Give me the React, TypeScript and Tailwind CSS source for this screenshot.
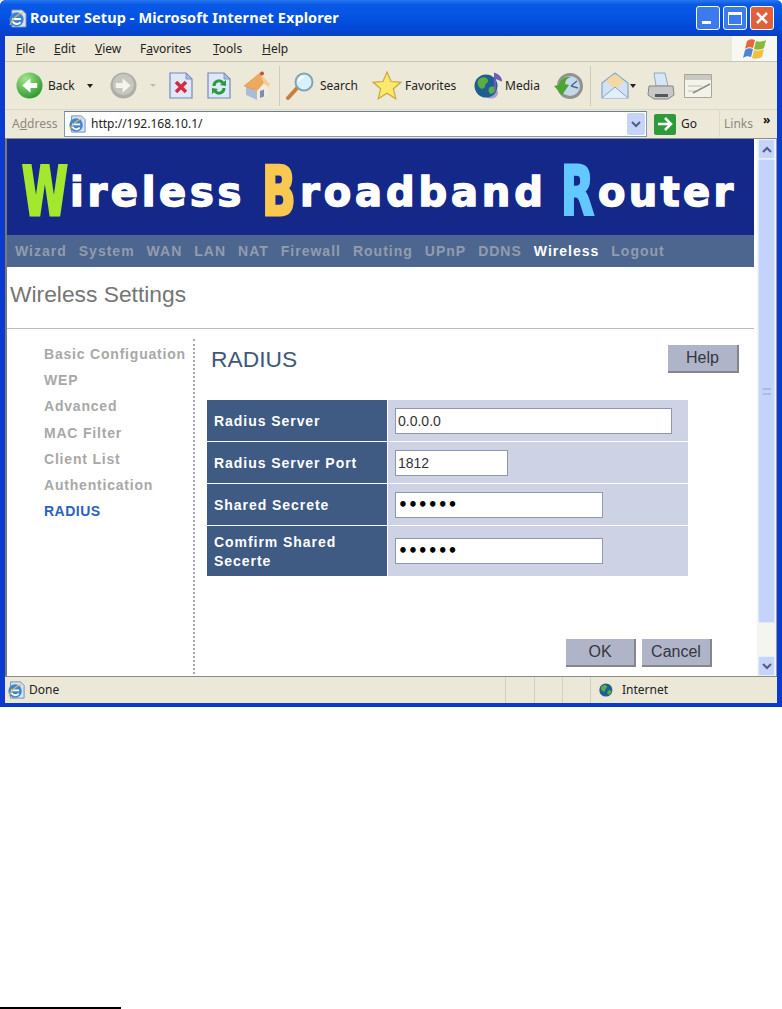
import React from "react";

const menuItems = [
  { pre: "", u: "F", post: "ile", w: "w-[38px]" },
  { pre: "", u: "E", post: "dit", w: "w-[41px]" },
  { pre: "", u: "V", post: "iew", w: "w-[45px]" },
  { pre: "F", u: "a", post: "vorites", w: "w-[73px]" },
  { pre: "", u: "T", post: "ools", w: "w-[49px]" },
  { pre: "", u: "H", post: "elp", w: "w-[40px]" },
];

const navItems = ["Wizard", "System", "WAN", "LAN", "NAT", "Firewall", "Routing", "UPnP", "DDNS", "Wireless", "Logout"];
const sideItems = ["Basic Configuation", "WEP", "Advanced", "MAC Filter", "Client List", "Authentication", "RADIUS"];

function BackIcon() {
  return (
    <svg width="27" height="27" viewBox="0 0 28 28" className="shrink-0">
      <defs>
        <radialGradient id="back" cx="35%" cy="25%" r="85%">
          <stop offset="0%" stopColor="#a4e48a" />
          <stop offset="100%" stopColor="#239428" />
        </radialGradient>
      </defs>
      <circle cx="14" cy="14" r="13.5" fill="url(#back)" />
      <path d="M22 11.500h-7V6.500L6.500 14l8.500 7.500V16.500h7z" fill="#fff" />
    </svg>
  );
}

function ForwardIcon() {
  return (
    <svg width="27" height="27" viewBox="0 0 28 28" className="shrink-0">
      <circle cx="14" cy="14" r="13.5" fill="#aeaea6" />
      <circle cx="14" cy="13" r="11" fill="#c6c6be" />
      <path d="M6 11.500h7V6.500l8.500 7.500-8.500 7.500V16.500H6z" fill="#f4f4ef" />
    </svg>
  );
}

function PageIcon({ children }: { children: React.ReactNode }) {
  return (
    <svg width="24" height="27" viewBox="0 0 24 27" className="shrink-0">
      <path d="M1 1h16l6 6v19H1z" fill="#dfe8f8" stroke="#7488b8" strokeWidth="1.2" />
      <path d="M17 1v6h6z" fill="#a9bde6" stroke="#7488b8" strokeWidth="0.8" />
      {children}
    </svg>
  );
}

function HomeIcon() {
  return (
    <svg width="28" height="30" viewBox="0 0 28 30" className="shrink-0">
      <path d="M3 15l11 5v9L3 24z" fill="#a9bdd6" />
      <path d="M14 19l6-7 5 5v8l-11 4z" fill="#f1ecdc" />
      <path d="M17 20l4-1.500v7L17 27z" fill="#7a8fb0" />
      <path d="M1 15L17 2l3.500 10L14 19.500z" fill="#eda95d" stroke="#d08a42" strokeWidth="0.5" />
      <path d="M17 2l10 11.500-1.500 2L20.500 12z" fill="#f6c98e" />
      <circle cx="19" cy="2.500" r="2" fill="#c94f3c" />
    </svg>
  );
}

function SearchIcon() {
  return (
    <svg width="29" height="28" viewBox="0 0 29 28" className="shrink-0">
      <path d="M2 26l10-11" stroke="#c6803a" strokeWidth="4" strokeLinecap="round" />
      <circle cx="18" cy="10" r="8.5" fill="#d8f0fa" stroke="#7fa4b8" strokeWidth="2" />
      <path d="M13 9a5 5 0 0 1 5-4" stroke="#fff" strokeWidth="2" fill="none" />
    </svg>
  );
}

function StarIcon() {
  return (
    <svg width="30" height="29" viewBox="0 0 30 29" className="shrink-0">
      <path d="M15 1l4 9.5 10 .8-7.600 6.500 2.400 10L15 22.300 6.200 27.800l2.400-10L1 11.300l10-.8z" fill="#fbe96c" stroke="#c9a83c" strokeWidth="1.2" />
    </svg>
  );
}

function GlobeIcon({ size, note }: { size: number; note?: boolean }) {
  return (
    <svg width={size} height={size} viewBox="0 0 28 28" className="shrink-0">
      {note && <ellipse cx="17" cy="21" rx="7" ry="5.500" fill="#a79ad8" />}
      <circle cx="12" cy="14" r="11.500" fill="#1f5f8f" />
      <path d="M5 7c4-3 8-2 9 1s-3 3-3 6-4 4-6 1-2-6 0-8zM15 16c2-2 6-2 7 0s-3 6-5 6-3-4-2-6z" fill="#58ad45" />
      {note && <path d="M21 2v16M21 2c3 1 5 3 6 6-2-1-4-2-6-2z" stroke="#6f5cb8" strokeWidth="2" fill="#6f5cb8" />}
    </svg>
  );
}

function HistoryIcon() {
  return (
    <svg width="29" height="28" viewBox="0 0 29 28" className="shrink-0">
      <circle cx="16" cy="14" r="11.500" fill="#c4d8ea" stroke="#8f948e" strokeWidth="3" />
      <path d="M17 14l6-5M17 14l7 2" stroke="#4c6a88" strokeWidth="1.500" />
      <path d="M0 14l5-1c1-5 6-9 12-8-4 1-6 4-6 7l4 1-7 10z" fill="#4ba52f" />
    </svg>
  );
}

function MailIcon() {
  return (
    <svg width="28" height="27" viewBox="0 0 28 27" className="shrink-0">
      <path d="M1 11L14 1l13 10v15H1z" fill="#cfe2f8" stroke="#8aa4c8" strokeWidth="1.200" />
      <path d="M5 10c2-3 5-7 9-7s7 4 9 7l-9 7z" fill="#f3d9a0" />
      <path d="M1 26l13-11 13 11" fill="#e2eefb" stroke="#8aa4c8" strokeWidth="1" />
    </svg>
  );
}

function PrintIcon() {
  return (
    <svg width="28" height="28" viewBox="0 0 28 28" className="shrink-0">
      <path d="M7 1h11l3 13H9z" fill="#d5e6f6" stroke="#95a8b8" />
      <path d="M2 14h24l1 9-6 4H7l-6-4z" fill="#c8c9c6" stroke="#84878a" />
      <path d="M8 22h13v3H8z" fill="#55585a" />
    </svg>
  );
}

function EditIcon() {
  return (
    <svg width="28" height="24" viewBox="0 0 28 24" className="shrink-0">
      <path d="M.5.5h27v23H.5z" fill="#f4f3ea" stroke="#a6a69c" />
      <path d="M1 1h26v5H1z" fill="#c9c9bf" />
      <path d="M4 12h14M4 17h9" stroke="#c0c0b6" strokeWidth="1.200" />
      <path d="M9 19l17-9" stroke="#8e8e84" strokeWidth="1.500" />
    </svg>
  );
}

function IePage({ size }: { size: number }) {
  return (
    <svg width={size} height={size} viewBox="0 0 20 20" className="shrink-0">
      <path d="M4 1h11l4 4v14H4z" fill="#d7e4f6" stroke="#6a88b8" />
      <circle cx="9" cy="11" r="7.500" fill="#3f86d2" />
      <path d="M4.500 10.500h9M5 13c1 3 6 4 8 1" stroke="#fff" strokeWidth="2" fill="none" />
      <path d="M2 17c2-6 8-12 14-13" stroke="#e6ba5a" strokeWidth="1.200" fill="none" />
    </svg>
  );
}

function XpFlag() {
  return (
    <svg width="24" height="22" viewBox="0 0 24 22">
      <path d="M4 3c3-2 5-2 8-1l-2 8C7 9 5 9 2 11z" fill="#e8683c" />
      <path d="M13 3c3 1 6 1 10-1l-2 8c-3 2-7 2-10 1z" fill="#8ab83c" />
      <path d="M2 12c3-2 5-2 8-1l-2 8c-3-1-5-1-8 1z" fill="#4c84d8" />
      <path d="M11 12c3 1 6 1 10-1l-2 8c-4 2-7 2-10 1z" fill="#f0c040" />
    </svg>
  );
}

function ScrollButton({ down }: { down?: boolean }) {
  return (
    <div className="h-[20px] w-[17px] mx-auto rounded-[2px] bg-[#c5d4f8] border border-[#e6edfc] flex items-center justify-center">
      <svg width="10" height="7" viewBox="0 0 10 7">
        <path d={down ? "M1 1l4 4 4-4" : "M1 6l4-4 4 4"} stroke="#4d6185" strokeWidth="2" fill="none" />
      </svg>
    </div>
  );
}

function FormRow({ label, h, children }: { label: React.ReactNode; h: string; children: React.ReactNode }) {
  return (
    <div className={`flex ${h}`}>
      <div className="w-[180px] bg-[#3f5a83] text-white font-bold text-[14px] leading-[19px] tracking-[0.95px] pl-[7px] pt-[2px] flex items-center">
        {label}
      </div>
      <div className="w-[300px] ml-px bg-[#cdd3e5] pl-[7px] flex items-center">{children}</div>
    </div>
  );
}

function FieldInput({ w, value, password }: { w: string; value: string; password?: boolean }) {
  return (
    <input
      type={password ? "password" : "text"}
      readOnly
      defaultValue={value}
      className={`${w} h-[26px] bg-white border border-[#8d98ac] pl-[2px] outline-none ${password ? "text-black text-[15.500px] font-bold font-['DejaVu_Sans',sans-serif]" : "text-[#333] text-[14px] font-['Liberation_Sans',sans-serif]"}`}
    />
  );
}

function GrayButton({ w, h, label }: { w: string; h: string; label: string }) {
  return (
    <div className={`${w} ${h} bg-[#b0b4c8] border-r-2 border-b-2 border-r-[#84868e] border-b-[#84868e] flex items-center justify-center text-[16px] text-[#33373f]`}>
      {label}
    </div>
  );
}

export default function App() {
  return (
    <div className="w-[782px] h-[1009px] overflow-hidden bg-white font-['Liberation_Sans',sans-serif]">
      <div className="h-[707px] flex flex-col bg-[#0a3ad0] rounded-t-[6px] overflow-hidden">
        {/* title bar */}
        <div className="h-[36px] flex items-center pl-[8px] pr-[8px] bg-[linear-gradient(#2a78ee_0%,#0a5ae6_12%,#0553e2_45%,#0348d8_80%,#0a3fc0_100%)]">
          <IePage size={19} />
          <span className="ml-[3px] text-white font-bold text-[14.5px] tracking-[0.1px] font-['Noto_Sans',sans-serif]">
            Router Setup - Microsoft Internet Explorer
          </span>
          <div className="ml-auto flex gap-[3px]">
            <div className="w-[24px] h-[24px] rounded-[3px] border border-white bg-[#3c7af0] flex items-end pl-[5px] pb-[5px]">
              <div className="w-[9px] h-[3px] bg-white" />
            </div>
            <div className="w-[24px] h-[24px] rounded-[3px] border border-white bg-[#3c7af0] flex items-center justify-center">
              <div className="w-[14px] h-[13px] border border-white border-t-[3px]" />
            </div>
            <div className="w-[24px] h-[24px] rounded-[3px] border border-white bg-[#e0603c] flex items-center justify-center">
              <svg width="14" height="14" viewBox="0 0 14 14">
                <path d="M2 2l10 10M12 2L2 12" stroke="#fff" strokeWidth="2.500" />
              </svg>
            </div>
          </div>
        </div>

        {/* menu */}
        <div className="h-[26px] mx-[5px] flex bg-[#ede9d8] border-b border-[#c9c6b6] text-[12px] text-[#222] font-['Noto_Sans',sans-serif]">
          <div className="pl-[11px] flex items-center flex-1">
            {menuItems.map((m) => (
              <span key={m.u} className={m.w}>
                {m.pre}
                <span className="underline">{m.u}</span>
                {m.post}
              </span>
            ))}
          </div>
          <div className="w-[45px] bg-[#f8f8f2] flex items-center justify-center">
            <XpFlag />
          </div>
        </div>

        {/* toolbar */}
        <div className="h-[48px] mx-[5px] flex items-center bg-[#ede9d8] border-b border-[#dcd8c6] text-[12px] text-[#222] font-['Noto_Sans',sans-serif]">
          <div className="ml-[11px]"><BackIcon /></div>
          <span className="ml-[5px] w-[27px]">Back</span>
          <span className="ml-[12px] w-[6px] h-0 border-x-[3px] border-t-[4px] border-x-transparent border-t-[#222]" />
          <div className="ml-[17px]"><ForwardIcon /></div>
          <span className="ml-[13px] w-[6px] h-0 border-x-[3px] border-t-[3px] border-x-transparent border-t-[#bbb]" />
          <div className="ml-[13px]">
            <PageIcon>
              <path d="M7 10l10 10M17 10L7 20" stroke="#d8283c" strokeWidth="3.500" />
            </PageIcon>
          </div>
          <div className="ml-[14px]">
            <PageIcon>
              <path d="M7 14c0-5 6-7 9-3M17 16c0 5-6 7-9 3" stroke="#2a9a3a" strokeWidth="3" fill="none" />
              <path d="M13 13l6 1 0-6zM11 17l-6-1 0 6z" fill="#2a9a3a" />
            </PageIcon>
          </div>
          <div className="ml-[12px]"><HomeIcon /></div>
          <div className="ml-[8px] w-px h-[40px] bg-[#cfcbb9]" />
          <div className="ml-[6px]"><SearchIcon /></div>
          <span className="ml-[5px] w-[40px]">Search</span>
          <div className="ml-[12px]"><StarIcon /></div>
          <span className="ml-[3px] w-[55px]">Favorites</span>
          <div className="ml-[14px]"><GlobeIcon size={28} note /></div>
          <span className="ml-[3px] w-[36px]">Media</span>
          <div className="ml-[13px]"><HistoryIcon /></div>
          <div className="ml-[7px] w-px h-[40px] bg-[#cfcbb9]" />
          <div className="ml-[10px]"><MailIcon /></div>
          <span className="ml-[1px] w-[6px] h-0 border-x-[3px] border-t-[4px] border-x-transparent border-t-[#222]" />
          <div className="ml-[11px]"><PrintIcon /></div>
          <div className="ml-[9px]"><EditIcon /></div>
        </div>

        {/* address bar */}
        <div className="h-[29px] mx-[5px] flex items-center bg-[#ede9d8] border-b border-[#8c8c84] text-[12px] font-['Noto_Sans',sans-serif]">
          <span className="ml-[7px] w-[45px] text-[#8a8a80]">A<span className="underline">d</span>dress</span>
          <div className="ml-[7px] w-[583px] h-[26px] flex items-center bg-white border border-[#7f9db9] border-t-[#6a7f94] pl-[3px] text-[#222]">
            <IePage size={18} />
            <span className="ml-[5px] flex-1">http://192.168.10.1/</span>
            <div className="w-[18px] h-[22px] mr-px rounded-[2px] bg-[#c5d4f8] flex items-center justify-center">
              <svg width="10" height="7" viewBox="0 0 10 7">
                <path d="M1 1l4 4 4-4" stroke="#4d6185" strokeWidth="2" fill="none" />
              </svg>
            </div>
          </div>
          <div className="ml-[7px] w-[22px] h-[21px] rounded-[2px] bg-[#2f9a3a] flex items-center justify-center">
            <svg width="16" height="14" viewBox="0 0 16 14">
              <path d="M1 7h12M8 1l6 6-6 6" stroke="#fff" strokeWidth="2.500" fill="none" />
            </svg>
          </div>
          <span className="ml-[5px] w-[16px] text-[#222]">Go</span>
          <div className="ml-[22px] w-px h-[26px] bg-[#dcd8c6]" />
          <span className="ml-[4px] w-[28px] text-[#8a8a80]">Links</span>
          <span className="ml-[11px] font-bold text-[12px] leading-[12px] -mt-[8px] text-[#111]">»</span>
        </div>

        {/* page + scrollbar */}
        <div className="h-[537px] mx-[5px] flex bg-white border-l-2 border-[#7a7a72]">
          <div className="w-[747px] flex flex-col">
            <div className="h-[96px] bg-[#14288a] flex items-end text-white font-bold font-['DejaVu_Sans',sans-serif] text-[40px] leading-[46px] pb-[20px] pl-[15px] whitespace-nowrap [-webkit-text-stroke:1.5px_#fff]">
              <span className="inline-block w-[48px] origin-left scale-x-[0.62] text-[#a4e82e] text-[67px] [-webkit-text-stroke:3px_#a4e82e]">W</span>
              <span className="w-[192px] tracking-[3.700px]">ireless</span>
              <span className="inline-block w-[38px] origin-left scale-x-[0.66] text-[#f8c850] text-[67px] [-webkit-text-stroke:3px_#f8c850]">B</span>
              <span className="w-[261px] tracking-[3.900px]">roadband</span>
              <span className="inline-block w-[37px] origin-left scale-x-[0.64] text-[#62c8ff] text-[67px] [-webkit-text-stroke:3px_#62c8ff]">R</span>
              <span className="tracking-[3.300px]">outer</span>
            </div>
            <div className="h-[32px] bg-[#4d6690] flex items-center pl-[8px] gap-[12px] font-bold text-[14px] tracking-[1px] text-[#929cae]">
              {navItems.map((n) => (
                <span key={n} className={n === "Wireless" ? "text-white" : ""}>{n}</span>
              ))}
            </div>
            <div className="h-[62px] border-b border-[#bdbdbd] pl-[3px] pt-[13px] text-[22.8px] leading-[28px] text-[#757575]">
              Wireless Settings
            </div>
            <div className="flex flex-1 min-h-0 pt-[10px]">
              <div className="w-[188px] border-r-2 border-dotted border-[#a8a8a8] pl-[37px] pt-[2px] mb-[2px]">
                {sideItems.map((s) => (
                  <div
                    key={s}
                    className={`h-[26.2px] leading-[26px] font-bold text-[14px] whitespace-nowrap ${s === "RADIUS" ? "text-[#2a62c0] tracking-[0.5px]" : "text-[#a8a8a8] tracking-[0.8px]"}`}
                  >
                    {s}
                  </div>
                ))}
              </div>
              <div className="flex-1 pl-[12px] flex flex-col">
                <div className="flex justify-between h-[61px] pr-[15px] pt-[6px]">
                  <span className="ml-[4px] text-[22.8px] leading-[28px] text-[#3f5877]">RADIUS</span>
                  <GrayButton w="w-[71px]" h="h-[28px]" label="Help" />
                </div>
                <div className="w-[481px] flex flex-col gap-px">
                  <FormRow label="Radius Server" h="h-[41px]">
                    <FieldInput w="w-[277px]" value="0.0.0.0" />
                  </FormRow>
                  <FormRow label="Radius Server Port" h="h-[41px]">
                    <FieldInput w="w-[113px]" value="1812" />
                  </FormRow>
                  <FormRow label="Shared Secrete" h="h-[41px]">
                    <FieldInput w="w-[208px]" value="123456" password />
                  </FormRow>
                  <FormRow label={<span>Comfirm Shared<br />Secerte</span>} h="h-[50px]">
                    <FieldInput w="w-[208px]" value="123456" password />
                  </FormRow>
                </div>
                <div className="mt-[63px] flex justify-end gap-[6px] pr-[42px]">
                  <GrayButton w="w-[70px]" h="h-[28px]" label="OK" />
                  <GrayButton w="w-[70px]" h="h-[28px]" label="Cancel" />
                </div>
              </div>
            </div>
          </div>
          <div className="w-[20px] ml-[3px] bg-[#f5f5ef] flex flex-col border-r border-[#9a9a92]">
            <ScrollButton />
            <div className="h-[464px] w-[17px] mx-auto bg-[#c3d3fb] border border-[#dfe7fb] rounded-[2px] flex items-center justify-center">
              <div className="w-[8px] h-[7px] border-y-2 border-[#a9bbe6]" />
            </div>
            <div className="flex-1" />
            <ScrollButton down />
          </div>
        </div>

        {/* status bar */}
        <div className="h-[27px] mx-[5px] flex items-center bg-[#ebe8d8] border-t border-[#8c8c84] text-[12px] text-[#222] font-['Noto_Sans',sans-serif]">
          <div className="ml-[2px]"><IePage size={18} /></div>
          <span className="ml-[4px] w-[476px]">Done</span>
          <div className="w-[29px] h-full border-l border-[#d4d0be]" />
          <div className="w-[28px] h-full border-l border-[#d4d0be]" />
          <div className="w-[28px] h-full border-l border-[#d4d0be]" />
          <div className="w-[175px] h-full border-l border-[#d4d0be] flex items-center pl-[8px]">
            <GlobeIcon size={16} />
            <span className="ml-[7px]">Internet</span>
          </div>
        </div>
        <div className="h-[4px]" />
      </div>

      {/* footnote rule */}
      <div className="mt-[300px] w-[121px] border-t-2 border-black" />
    </div>
  );
}
